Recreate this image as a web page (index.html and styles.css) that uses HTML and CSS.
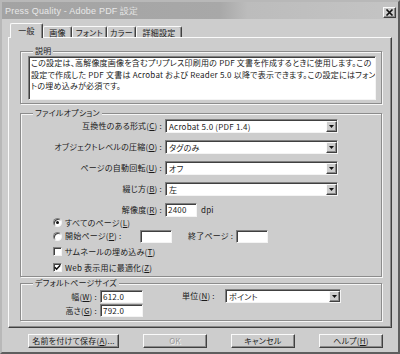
FILE: index.html
```html
<!DOCTYPE html>
<html lang="ja">
<head>
<meta charset="utf-8">
<title>Press Quality - Adobe PDF 設定</title>
<link rel="stylesheet" href="styles.css">
</head>
<body>
<div class="win">
  <div class="titlebar">
    <span class="title">Press Quality - Adobe PDF 設定</span>
    <span class="close"><svg width="9" height="7" viewBox="0 0 9 7"><path d="M1.5 0.5 L7.5 6.5 M7.5 0.5 L1.5 6.5" stroke="#111" stroke-width="1.6" fill="none"/></svg></span>
  </div>
  <div class="content">
    <div class="tabs">
      <div class="tab active t1">一般</div>
      <div class="tab t2">画像</div>
      <div class="tab t3">フォント</div>
      <div class="tab t4">カラー</div>
      <div class="tab t5">詳細設定</div>
    </div>
    <div class="panel">
      <fieldset class="group g-desc">
        <legend>説明</legend>
        <div class="desc">この設定は、高解像度画像を含むプリプレス印刷用の PDF 文書を作成するときに使用します。この<br>設定で作成した PDF 文書は Acrobat および Reader 5.0 以降で表示できます。この設定にはフォン<br>トの埋め込みが必須です。</div>
      </fieldset>
      <fieldset class="group g-file">
        <legend>ファイルオプション</legend>
        <div class="form">
          <label class="lbl">互換性のある形式(<u>C</u>) :</label>
          <div class="select"><span class="val">Acrobat 5.0 (PDF 1.4)</span><span class="dd"><svg width="5" height="3" viewBox="0 0 5 3"><polygon points="0,0 5,0 2.5,3" fill="#111"/></svg></span></div>
          <label class="lbl">オブジェクトレベルの圧縮(<u>O</u>) :</label>
          <div class="select"><span class="val">タグのみ</span><span class="dd"><svg width="5" height="3" viewBox="0 0 5 3"><polygon points="0,0 5,0 2.5,3" fill="#111"/></svg></span></div>
          <label class="lbl">ページの自動回転(<u>U</u>) :</label>
          <div class="select"><span class="val">オフ</span><span class="dd"><svg width="5" height="3" viewBox="0 0 5 3"><polygon points="0,0 5,0 2.5,3" fill="#111"/></svg></span></div>
          <label class="lbl">綴じ方(<u>B</u>) :</label>
          <div class="select"><span class="val">左</span><span class="dd"><svg width="5" height="3" viewBox="0 0 5 3"><polygon points="0,0 5,0 2.5,3" fill="#111"/></svg></span></div>
          <label class="lbl">解像度(<u>R</u>) :</label>
          <div class="res"><span class="input w-res">2400</span><span class="unit">dpi</span></div>
        </div>
        <div class="opts">
          <div class="opt o1"><span class="radio on"></span><span class="otext">すべてのページ(<u>L</u>)</span></div>
          <div class="opt o2"><span class="radio"></span><span class="otext range-l">開始ページ(<u>P</u>) :</span><span class="input w-page"></span><span class="range-r">終了ページ :</span><span class="input w-page"></span></div>
          <div class="opt o3"><span class="check"></span><span class="otext">サムネールの埋め込み(<u>T</u>)</span></div>
          <div class="opt o4"><span class="check"><svg width="7" height="7" viewBox="0 0 7 7"><path d="M0.8 3.2 L2.6 5.2 L6.2 1.2" stroke="#111" stroke-width="1.5" fill="none"/></svg></span><span class="otext">Web 表示用に最適化(<u>Z</u>)</span></div>
        </div>
      </fieldset>
      <fieldset class="group g-size">
        <legend>デフォルトページサイズ</legend>
        <div class="sizes">
          <div class="dims">
            <label class="lbl">幅(<u>W</u>) :</label>
            <span class="input w-dim">612.0</span>
            <label class="lbl">高さ(<u>G</u>) :</label>
            <span class="input w-dim">792.0</span>
          </div>
          <div class="unitrow">
            <label class="lbl unit-l">単位(<u>N</u>) :</label>
            <div class="select sel-unit"><span class="val">ポイント</span><span class="dd"><svg width="5" height="3" viewBox="0 0 5 3"><polygon points="0,0 5,0 2.5,3" fill="#111"/></svg></span></div>
          </div>
        </div>
      </fieldset>
    </div>
    <div class="buttons">
      <div class="btn b-save">名前を付けて保存(<u>A</u>)...</div>
      <div class="btn b-ok disabled">OK</div>
      <div class="btn b-cancel">キャンセル</div>
      <div class="btn b-help">ヘルプ(<u>H</u>)</div>
    </div>
  </div>
</div>
</body>
</html>
```
FILE: styles.css
```css
* { box-sizing: border-box; }
html, body { margin: 0; padding: 0; }
body {
  width: 400px;
  height: 354px;
  overflow: hidden;
  background: #cdcdcd;
  font-family: "Noto Sans CJK JP", "Noto Sans", sans-serif;
  font-size: 8px;
  line-height: 10px;
  letter-spacing: 0.22px;
  color: #1a1a1a;
  font-feature-settings: "palt";
}
u { text-decoration: underline; text-underline-offset: 1px; }

.win {
  width: 400px;
  height: 354px;
  display: flex;
  flex-direction: column;
  background: #cdcdcd;
  border: 2px solid;
  border-color: #b8b8b8 #5e5e5e #5e5e5e #b8b8b8;
}

.titlebar {
  height: 17px;
  flex: none;
  display: flex;
  align-items: center;
  justify-content: space-between;
  padding: 0 2px 0 3px;
  background: linear-gradient(to right, #a3a3a3 0%, #a8a8a8 55%, #bcbcbc 62%, #c4c4c4 100%);
}
.title {
  font-family: "Liberation Sans", Arial, sans-serif;
  font-size: 9px;
  color: #e8e8e8;
  letter-spacing: 0.2px;
}
.close {
  width: 13px;
  height: 11px;
  margin-top: 4px;
  display: flex;
  align-items: center;
  justify-content: center;
  background: #cdcdcd;
  border: 1px solid;
  border-color: #fafafa #404040 #404040 #fafafa;
  box-shadow: inset -1px -1px 0 #8a8a8a;
}

.content {
  flex: 1;
  display: flex;
  flex-direction: column;
  padding: 0 6px 4px;
}

.tabs {
  height: 18px;
  flex: none;
  display: flex;
  align-items: flex-end;
  padding-left: 2px;
  position: relative;
  z-index: 1;
}
.tab {
  height: 11px;
  padding-top: 1px;
  text-align: center;
  line-height: 10px;
  background: #cdcdcd;
  border-top: 1px solid #fafafa;
  border-left: 1px solid #fafafa;
  border-right: 1px solid #404040;
  border-radius: 2px 2px 0 0;
  box-shadow: inset -1px 0 0 #8a8a8a;
}
.tab.active {
  height: 15px;
  margin-bottom: -1px;
  padding-top: 2px;
}
.t1 { width: 33px; }
.t2 { width: 29px; }
.t3 { width: 35px; }
.t4 { width: 29px; }
.t5 { width: 46px; }

.panel {
  height: 291px;
  flex: none;
  border: 1px solid;
  border-color: #fafafa #404040 #404040 #fafafa;
  box-shadow: inset -1px -1px 0 #8a8a8a;
  padding: 8px 9px 5px 11px;
  display: flex;
  flex-direction: column;
}

.group {
  margin: 0;
  min-width: 0;
  border: 1px solid #8c8c8c;
  box-shadow: inset 1px 1px 0 #f6f6f6, 1px 1px 0 #f6f6f6;
  padding: 0 5px 3px 7px;
}
.group legend {
  padding: 0 2px;
  margin-left: 5px;
  line-height: 10px;
  background: #cdcdcd;
}
.g-file { margin-top: 4px; padding-top: 1px; padding-bottom: 3px; }
.g-size { margin-top: 1px; padding-top: 2px; padding-bottom: 3px; }

.desc {
  height: 44px;
  background: #fff;
  border: 1px solid;
  border-color: #808080 #f4f4f4 #f4f4f4 #808080;
  box-shadow: inset 1px 1px 0 #404040;
  padding: 0 1px 0 2px;
  line-height: 11.5px;
  white-space: nowrap;
  overflow: hidden;
}

.form {
  display: grid;
  grid-template-columns: 134px 173px;
  column-gap: 3px;
  grid-auto-rows: 14px;
  row-gap: 7px;
}
.lbl {
  text-align: right;
  white-space: nowrap;
  line-height: 14px;
}

.select {
  height: 14px;
  display: flex;
  background: #fff;
  border: 1px solid;
  border-color: #808080 #f4f4f4 #f4f4f4 #808080;
  box-shadow: inset 1px 1px 0 #404040;
  padding: 1px 0 0 1px;
}
.select .val {
  flex: 1;
  padding-left: 2px;
  line-height: 11px;
  white-space: nowrap;
}
.select .dd {
  width: 11px;
  height: 11px;
  display: flex;
  align-items: center;
  justify-content: center;
  background: #cdcdcd;
  border: 1px solid;
  border-color: #fafafa #404040 #404040 #fafafa;
  box-shadow: inset -1px -1px 0 #8a8a8a;
}

.input {
  display: block;
  height: 13px;
  background: #fff;
  border: 1px solid;
  border-color: #808080 #f4f4f4 #f4f4f4 #808080;
  box-shadow: inset 1px 1px 0 #404040;
  padding-left: 2px;
  line-height: 11px;
}
.res { display: flex; align-items: center; }
.w-res { width: 32px; height: 14px; line-height: 12px; }
.unit { margin-left: 4px; }

.opts { display: flex; flex-direction: column; padding-left: 25px; }
.opt { display: flex; align-items: center; height: 11px; }
.o2 { height: 14px; margin-top: 1px; }
.o3 { margin-top: 3px; }
.o4 { margin-top: 5px; }
.otext { margin-left: 3px; white-space: nowrap; }
.range-l { width: 75px; }
.w-page { width: 32px; }
.range-r { width: 48px; margin-left: 16px; white-space: nowrap; }

.radio {
  width: 9px;
  height: 9px;
  flex: none;
  border-radius: 50%;
  background: #fff;
  border: 1px solid;
  border-color: #808080 #f4f4f4 #f4f4f4 #808080;
  box-shadow: inset 1px 1px 0 #404040;
  display: flex;
  align-items: center;
  justify-content: center;
}
.radio.on::after {
  content: "";
  width: 3px;
  height: 3px;
  border-radius: 50%;
  background: #111;
}
.check {
  width: 9px;
  height: 9px;
  flex: none;
  background: #fff;
  border: 1px solid;
  border-color: #808080 #f4f4f4 #f4f4f4 #808080;
  box-shadow: inset 1px 1px 0 #404040;
  display: flex;
  align-items: center;
  justify-content: center;
}

.sizes { display: flex; align-items: flex-start; }
.dims {
  display: grid;
  grid-template-columns: 69px 43px;
  column-gap: 3px;
  grid-auto-rows: 13px;
  row-gap: 1px;
}
.dims .lbl { line-height: 13px; }
.unitrow { display: flex; margin-left: 39px; margin-top: -1px; }
.unit-l { width: 40px; text-align: left; margin-right: 3px; }
.sel-unit { width: 116px; }

.buttons {
  display: flex;
  gap: 24px;
  margin-top: 6px;
  padding-left: 20px;
  height: 14px;
  flex: none;
}
.btn {
  height: 14px;
  text-align: center;
  line-height: 12px;
  background: #cdcdcd;
  border: 1px solid;
  border-color: #fafafa #404040 #404040 #fafafa;
  box-shadow: inset -1px -1px 0 #8a8a8a;
  white-space: nowrap;
}
.b-save { width: 91px; }
.b-ok, .b-cancel, .b-help { width: 64px; }
.disabled { color: #9a9a9a; text-shadow: 1px 1px 0 #f4f4f4; }
```
